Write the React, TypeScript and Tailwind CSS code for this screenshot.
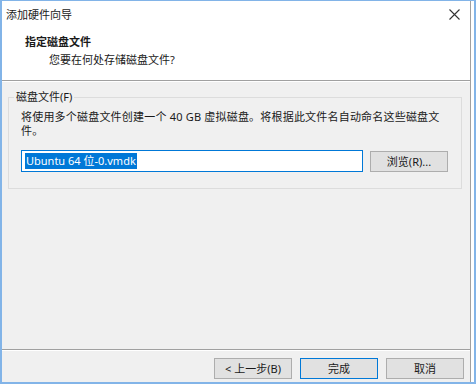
const font = { fontFamily: '"Noto Sans", "Noto Sans CJK SC", sans-serif' };

function WinButton({ label, primary }: { label: string; primary?: boolean }) {
  return (
    <button
      className={
        "flex h-[21px] w-[78px] items-center justify-center bg-[#e1e1e1] text-[11px] leading-none text-[#1a1a1a] " +
        (primary ? "border border-[#0078d7]" : "border border-[#adadad]")
      }
    >
      {label}
    </button>
  );
}

export default function App() {
  return (
    <div
      className="flex h-[384px] w-[476px] border-t border-b-2 border-l-2 border-r-2 border-[#82b4e8] bg-white text-[#1a1a1a]"
      style={font}
    >
      <div className="flex w-[468px] flex-col">
        {/* header */}
        <div className="flex h-[79px] flex-col bg-white">
          <div className="flex h-[28px] items-center justify-between pl-[4px] pr-[10px]">
            <span className="text-[11px]">添加硬件向导</span>
            <svg width="11" height="11" viewBox="0 0 11 11" className="mt-[-2px]">
              <path d="M0.5 0.5 L10.5 10.5 M10.5 0.5 L0.5 10.5" stroke="#333" strokeWidth="1.1" />
            </svg>
          </div>
          <div className="mt-[6px] pl-[23px] text-[11px] font-bold leading-[14px]">指定磁盘文件</div>
          <div className="mt-[4px] pl-[47px] text-[11px] leading-[14px]">您要在何处存储磁盘文件?</div>
        </div>
        <div className="h-px bg-[#a0a0a0]" />
        <div className="h-px bg-white" />

        {/* body */}
        <div className="flex flex-1 flex-col bg-[#f0f0f0] px-[6px] pt-[15px]">
          <div className="relative h-[92px] w-[454px] border border-[#dcdcdc] px-[12px] pt-[12px]">
            <span className="absolute left-[5px] top-[-8px] bg-[#f0f0f0] px-[2px] text-[11px] leading-[14px]">
              磁盘文件(F)
            </span>
            <p className="whitespace-nowrap text-[11px] leading-[14px] tracking-[0.2px]">
              将使用多个磁盘文件创建一个 40 GB 虚拟磁盘。将根据此文件名自动命名这些磁盘文
              <br />
              件。
            </p>
            <div className="mt-[12px] flex items-start gap-[7px]">
              <div className="flex h-[22px] w-[342px] items-center border border-[#0078d7] bg-white pl-[3px]">
                <span className="bg-[#0078d7] px-px text-[11px] leading-[16px] text-white">Ubuntu 64 位-0.vmdk</span>
              </div>
              <div className="mt-px">
                <WinButton label="浏览(R)..." />
              </div>
            </div>
          </div>
        </div>

        <div className="h-px bg-[#a0a0a0]" />
        <div className="h-px bg-white" />

        {/* footer */}
        <div className="flex h-[31px] items-start justify-end gap-[8px] bg-[#f0f0f0] pr-[6px] pt-[7px]">
          <WinButton label="< 上一步(B)" />
          <WinButton label="完成" primary />
          <WinButton label="取消" />
        </div>
      </div>
      <div className="w-px bg-[#a0a0a0]" />
      <div className="w-[3px] bg-white" />
    </div>
  );
}
